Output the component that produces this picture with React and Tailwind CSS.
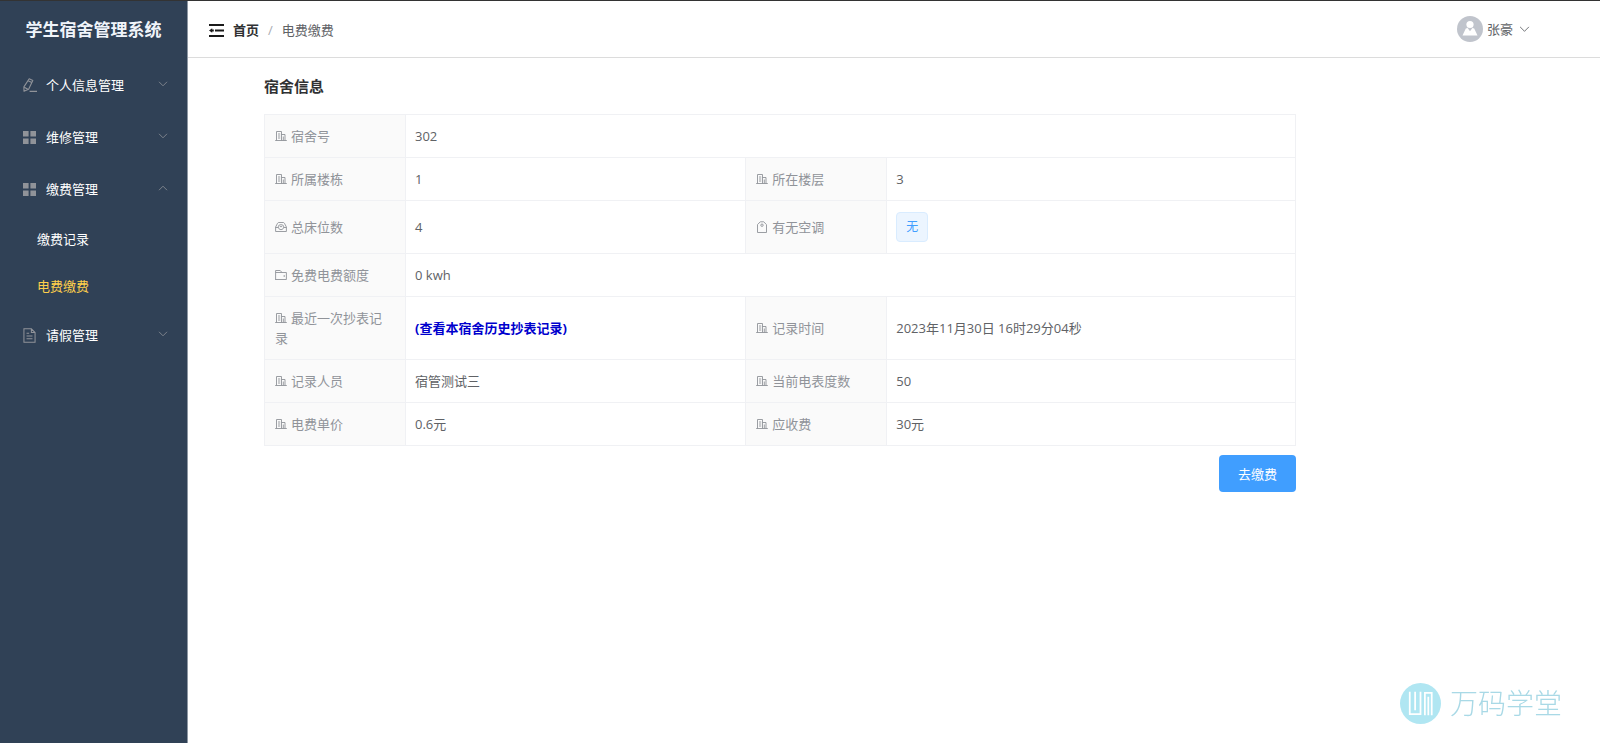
const FONT = "font-['Open_Sans','Noto_Sans_CJK_SC',sans-serif]";

const Chevron = ({ up, className }) => (
  <svg viewBox="0 0 10 6" className={className} fill="none" stroke="currentColor" strokeWidth="0.8">
    <path d={up ? "M1 5.2 5 1.2 9 5.2" : "M1 0.8 5 4.8 9 0.8"} />
  </svg>
);

const EditIcon = () => (
  <svg viewBox="0 0 14 14" className="size-[14px]" fill="none" stroke="currentColor" strokeWidth="1.1" strokeLinejoin="round">
    <path d="M6.2.7 9.8 2.4 5.6 11.2 1 13.2.9 8.9z" />
    <path d="M5.1 2.7 8.8 4.5M1.2 9.3 4.9 11.3M6.6 13.4H14" />
  </svg>
);

const GridIcon = () => (
  <svg viewBox="0 0 13 13" className="size-[13px]" fill="currentColor">
    <path d="M0 0h5.6v5.6H0zM7.4 0H13v5.6H7.4zM0 7.4h5.6V13H0zM7.4 7.4H13V13H7.4z" />
  </svg>
);

const DocIcon = () => (
  <svg viewBox="0 0 14 16" className="h-[15px] w-[13px]" fill="none" stroke="currentColor" strokeWidth="1.1">
    <path d="M1 .8h8l4 4v10.4H1zM9 .8v4h4M3.8 5.5h2.8M3.8 8.5h6.4M3.8 11.5h6.4" />
  </svg>
);

const BuildingIcon = () => (
  <path d="M1.5 10.5V1.5h5v9M6.5 4.500h3.500v6M.2 10.500h11.600M3 4h2.200M3 6h2.200M3 8h2.200M8.300 6.500v4" />
);

const BedIcon = () => (
  <path d="M.6 6 2.600 2.200Q3 1.500 3.700 1.500H8.300Q9 1.500 9.400 2.200L11.400 6V10.500H.6zM.6 6.500H3.400Q3.800 8.700 6 8.700T8.600 6.500H11.400M3.400 6.500V5.200Q3.500 3.700 6 3.700T8.600 5.200V6.500M4.800 5.600H7.200" />
);

const WalletIcon = () => (
  <path d="M.6 10.500V1.500H5.200L7 3.500M.6 3.500H11.400V10.500H.1M9.200 6V8" />
);

const TagIcon = () => (
  <>
    <path d="M1.500 11.500V3.600L4.300.8H7.700L10.500 3.600V11.500z" />
    <circle cx="6" cy="4.200" r="1.200" />
  </>
);

const Label = ({ icon: Icon = BuildingIcon, children }) => (
  <th scope="row" className="border border-[#f0f1f4] bg-[#fafafa] py-[11px] pr-4 pl-2.5 text-left font-normal text-[#909399]">
    <svg viewBox="0 0 12 12" className="mr-1 inline-block size-3 align-[-1px]" fill="none" stroke="currentColor" strokeWidth="0.9">
      <Icon />
    </svg>
    {children}
  </th>
);

const Value = ({ children, ...rest }) => (
  <td className="border border-[#f0f1f4] px-[9px] py-[11px] text-[#606266]" {...rest}>{children}</td>
);

const MENU = [
  { title: "个人信息管理", icon: EditIcon },
  { title: "维修管理", icon: GridIcon },
  {
    title: "缴费管理",
    icon: GridIcon,
    children: [{ title: "缴费记录" }, { title: "电费缴费", active: true }],
  },
  { title: "请假管理", icon: DocIcon },
];

function Sidebar() {
  return (
    <aside className="w-[188px] shrink-0 border-r border-[#8d97a3] bg-[#304156] text-white">
      <h1 className="flex h-[58px] items-center justify-center text-[17px] leading-5 font-bold text-[#f0f4fa]">学生宿舍管理系统</h1>
      <nav>
        {MENU.map(({ title, icon: Icon, children }) => (
          <div key={title}>
            <button className="flex h-[52px] w-full items-center pr-[19px] pl-[23px] text-left">
              <span className="flex w-[23px] shrink-0 text-[#909399]"><Icon /></span>
              <span className="flex-1">{title}</span>
              <Chevron up={!!children} className="mb-[3px] w-[10px] text-[#909399]" />
            </button>
            {children?.map((c) => (
              <a
                key={c.title}
                href="#"
                className={`flex h-[47px] items-center pl-[37px] ${c.active ? "text-[#ffd04b]" : "text-white"}`}>
                {c.title}
              </a>
            ))}
          </div>
        ))}
      </nav>
    </aside>
  );
}

function Header() {
  return (
    <header className="flex h-[57px] items-center justify-between border-b border-[#dcdcdc] pr-[70px] pl-[21px]">
      <div className="flex items-center pt-0.5">
        <button aria-label="折叠菜单" className="mr-[9px]">
          <svg viewBox="0 0 15 13" className="h-[13px] w-[15px]" fill="#1a1a1a">
            <path d="M0 0h15v2H0zM6 5.500h9v2H6zM0 11h15v2H0zM0 6.500 3.200 4.300v1.200H4.800v2H3.200v1.200z" />
          </svg>
        </button>
        <a href="#" className="font-bold text-[#303133]">首页</a>
        <span className="mx-[9px] text-[#a8abb2]">/</span>
        <span className="text-[#606266]">电费缴费</span>
      </div>
      <button className="flex items-center text-[#606266]">
        <svg viewBox="0 0 26 26" className="mr-1 size-[26px]">
          <circle cx="13" cy="13" r="13" fill="#c0c4cc" />
          <circle cx="13" cy="8.500" r="3.600" fill="#fff" />
          <path d="M5.500 19.600 8.800 12.500 10.600 12.100 13 15.200 15.400 12.100 17.200 12.500 20.500 19.600z" fill="#fff" />
        </svg>
        张豪
        <Chevron className="ml-[6px] w-[11px]" />
      </button>
    </header>
  );
}

function DormInfo() {
  return (
    <section className="pt-[18px] pr-[304px] pl-[76px]">
      <h2 className="text-[15px] leading-5 font-bold text-[#303133]">宿舍信息</h2>
      <table className="mt-[18px] w-full table-fixed border-collapse">
        <colgroup>
          <col className="w-[141px]" />
          <col className="w-[33%]" />
          <col className="w-[141px]" />
          <col />
        </colgroup>
        <tbody>
          <tr>
            <Label>宿舍号</Label>
            <Value colSpan={3}>302</Value>
          </tr>
          <tr>
            <Label>所属楼栋</Label>
            <Value>1</Value>
            <Label>所在楼层</Label>
            <Value>3</Value>
          </tr>
          <tr>
            <Label icon={BedIcon}>总床位数</Label>
            <Value>4</Value>
            <Label icon={TagIcon}>有无空调</Label>
            <Value>
              <span className="flex h-[30px] w-fit items-center rounded border border-[#d9ecff] bg-[#ecf5ff] px-[9px] text-xs text-[#409eff]">无</span>
            </Value>
          </tr>
          <tr>
            <Label icon={WalletIcon}>免费电费额度</Label>
            <Value colSpan={3}>0 kwh</Value>
          </tr>
          <tr>
            <Label>最近一次抄表记录</Label>
            <Value>
              <a href="#" className="font-bold text-[#0000cd]">(查看本宿舍历史抄表记录)</a>
            </Value>
            <Label>记录时间</Label>
            <Value>2023年11月30日 16时29分04秒</Value>
          </tr>
          <tr>
            <Label>记录人员</Label>
            <Value>宿管测试三</Value>
            <Label>当前电表度数</Label>
            <Value>50</Value>
          </tr>
          <tr>
            <Label>电费单价</Label>
            <Value>0.6元</Value>
            <Label>应收费</Label>
            <Value>30元</Value>
          </tr>
        </tbody>
      </table>
      <div className="mt-[9px] flex justify-end">
        <button className="h-[37px] rounded bg-[#409eff] px-[19px] text-white">去缴费</button>
      </div>
    </section>
  );
}

function Watermark() {
  return (
    <div className="fixed right-[38px] bottom-[19px] flex items-center text-[#a9d9e6]">
      <svg viewBox="0 0 42 42" className="mr-[9px] size-[41px]" fill="none">
        <circle cx="21" cy="21" r="21" fill="#b0e6f2" />
        <path d="M10 9V32H21V9M15.500 9V28M25.500 33V10H32.500V33M29 14V33" stroke="#fff" strokeWidth="1.800" />
      </svg>
      <span className="text-[28px] leading-[42px] font-light">万码学堂</span>
    </div>
  );
}

export default function App() {
  return (
    <div className={`flex min-h-screen border-t border-[#333] bg-white text-[13px] leading-5 ${FONT}`}>
      <Sidebar />
      <main className="min-w-0 flex-1">
        <Header />
        <DormInfo />
      </main>
      <Watermark />
    </div>
  );
}
